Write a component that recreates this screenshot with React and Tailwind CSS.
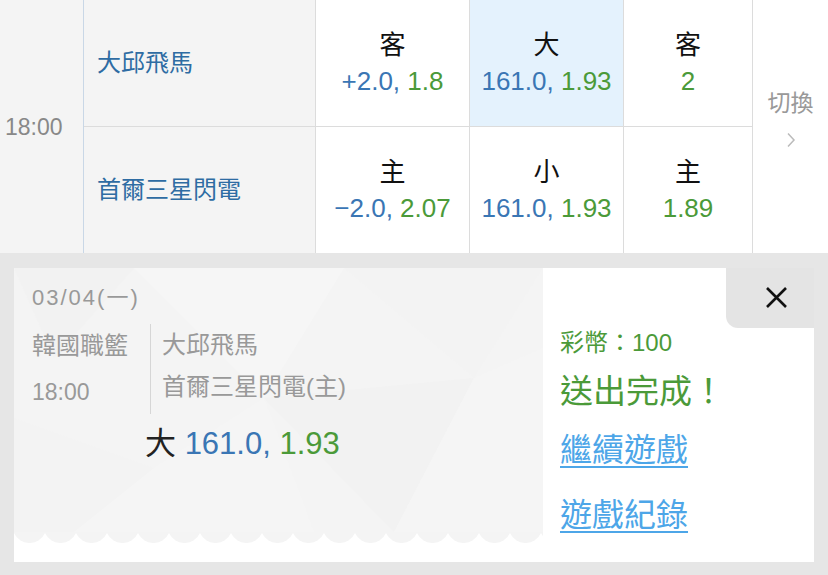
import React from 'react';

const font = "font-['Liberation_Sans','Noto_Sans_CJK_TC',sans-serif]";

const OddsCell = ({ label, line, price, active, width }) => (
    <div className={`${width} flex flex-col items-center justify-center border-r border-[#dcdcdc] ${active ? 'bg-[#e4f2fd]' : 'bg-white'}`}>
        <div className="text-[26px] leading-[30px] text-[#111]">{label}</div>
        <div className="mt-[6px] text-[26px] leading-[30px] whitespace-nowrap">
            {line && <span className="text-[#3a76b4]">{line}, </span>}
            <span className="text-[#4b9a39]">{price}</span>
        </div>
    </div>
);

const MatchRow = ({ team, cells, className }) => (
    <div className={`flex ${className}`}>
        <div className="w-[232px] flex items-center pl-[13px] bg-[#f4f4f4] border-r border-[#dcdcdc] text-[24px] text-[#2e6ca3]">
            {team}
        </div>
        {cells.map((c, i) => (
            <OddsCell key={i} {...c} />
        ))}
    </div>
);

// faint low-poly backdrop of the ticket
const PolyBackdrop = () => (
    <svg className="absolute inset-0" width="529" height="264" viewBox="0 0 529 264">
        <rect width="529" height="264" fill="#f4f4f4" />
        <polygon points="0,0 120,0 40,90" fill="#f2f2f2" />
        <polygon points="120,0 330,0 250,130" fill="#f6f6f6" />
        <polygon points="330,0 529,0 460,110" fill="#f3f3f3" />
        <polygon points="250,130 460,110 380,264" fill="#f2f2f2" />
        <polygon points="0,150 140,200 60,264 0,264" fill="#f3f3f3" />
        <polygon points="140,200 250,130 300,264 60,264" fill="#f5f5f5" />
        <polygon points="460,110 529,80 529,264 380,264" fill="#f5f5f5" />
    </svg>
);

const Scallops = () => (
    <svg width="529" height="11" className="block">
        <defs>
            <pattern id="scallop" width="31" height="11" patternUnits="userSpaceOnUse">
                <path d="M0 0 H31 V1 A17 17 0 0 1 0 1 Z" fill="#f4f4f4" />
            </pattern>
        </defs>
        <rect width="529" height="11" fill="white" />
        <rect width="529" height="11" fill="url(#scallop)" />
    </svg>
);

export default function App() {
    const rows = [
        {
            team: '大邱飛馬',
            className: 'h-[127px] border-b border-[#dcdcdc]',
            cells: [
                { label: '客', line: '+2.0', price: '1.8', width: 'w-[154px]' },
                { label: '大', line: '161.0', price: '1.93', width: 'w-[154px]', active: true },
                { label: '客', price: '2', width: 'w-[129px]' },
            ],
        },
        {
            team: '首爾三星閃電',
            className: 'h-[126px]',
            cells: [
                { label: '主', line: '−2.0', price: '2.07', width: 'w-[154px]' },
                { label: '小', line: '161.0', price: '1.93', width: 'w-[154px]' },
                { label: '主', price: '1.89', width: 'w-[129px]' },
            ],
        },
    ];

    return (
        <div className={`w-[828px] h-[575px] overflow-hidden bg-white ${font}`}>
            {/* odds table */}
            <div className="flex h-[253px]">
                <div className="w-[84px] flex items-center pl-[5px] pt-[2px] bg-[#f4f4f4] border-r border-[#c9d7e6] text-[23px] text-[#888]">
                    18:00
                </div>
                <div className="w-[669px] flex flex-col">
                    {rows.map((r) => (
                        <MatchRow key={r.team} {...r} />
                    ))}
                </div>
                <div className="flex-1 flex flex-col items-center justify-center pb-[17px] bg-white">
                    <div className="text-[23px] leading-[30px] text-[#999]">切換</div>
                    <svg width="10" height="16" viewBox="0 0 10 16" className="mt-[14px]">
                        <path d="M2 1.5 L8 8 L2 14.5" fill="none" stroke="#bbb" strokeWidth="1.5" />
                    </svg>
                </div>
            </div>

            {/* bet receipt */}
            <div className="h-[322px] bg-[#e6e6e6] pt-[15px] px-[14px]">
                <div className="h-[294px] bg-white flex">
                    <div className="w-[529px] flex flex-col">
                        <div className="relative flex-1 overflow-hidden">
                            <PolyBackdrop />
                            <div className="relative pl-[18px] pt-[18px]">
                                <div className="text-[22px] leading-[24px] tracking-[2px] text-[#999]">03/04(一)</div>
                                <div className="mt-[14px] flex">
                                    <div className="w-[118px] text-[#999]">
                                        <div className="text-[24px] leading-[44px]">韓國職籃</div>
                                        <div className="text-[23px] leading-[44px] pt-[2px]">18:00</div>
                                    </div>
                                    <div className="border-l border-[#d6d6d6] pl-[11px] text-[24px] leading-[42px] text-[#999]">
                                        <div>大邱飛馬</div>
                                        <div>首爾三星閃電(主)</div>
                                    </div>
                                </div>
                                <div className="mt-[12px] pl-[113px] text-[31px] leading-[36px] whitespace-nowrap">
                                    <span className="text-[#222]">大 </span>
                                    <span className="text-[#3a76b4]">161.0, </span>
                                    <span className="text-[#4b9a39]">1.93</span>
                                </div>
                            </div>
                        </div>
                        <Scallops />
                        <div className="h-[19px] bg-white" />
                    </div>

                    <div className="relative flex-1 pl-[17px] pt-[60px]">
                        <div className="absolute top-0 right-0 w-[88px] h-[60px] bg-[#e4e4e4] rounded-bl-[12px] pl-[39px] pt-[18px]">
                            <svg width="23" height="23" viewBox="0 0 23 23" className="block">
                                <path d="M2 2 L21 21 M21 2 L2 21" stroke="#111" strokeWidth="2.6" />
                            </svg>
                        </div>
                        <div className="text-[24px] leading-[30px] text-[#4b9a39]">彩幣：100</div>
                        <div className="mt-[14px] text-[33px] leading-[40px] text-[#4b9a39]">送出完成！</div>
                        <div className="mt-[18px] text-[32px] leading-[40px] text-[#4da6e8] underline decoration-2 underline-offset-[5px]">
                            繼續遊戲
                        </div>
                        <div className="mt-[25px] text-[32px] leading-[40px] text-[#4da6e8] underline decoration-2 underline-offset-[5px]">
                            遊戲紀錄
                        </div>
                    </div>
                </div>
            </div>
        </div>
    );
}
